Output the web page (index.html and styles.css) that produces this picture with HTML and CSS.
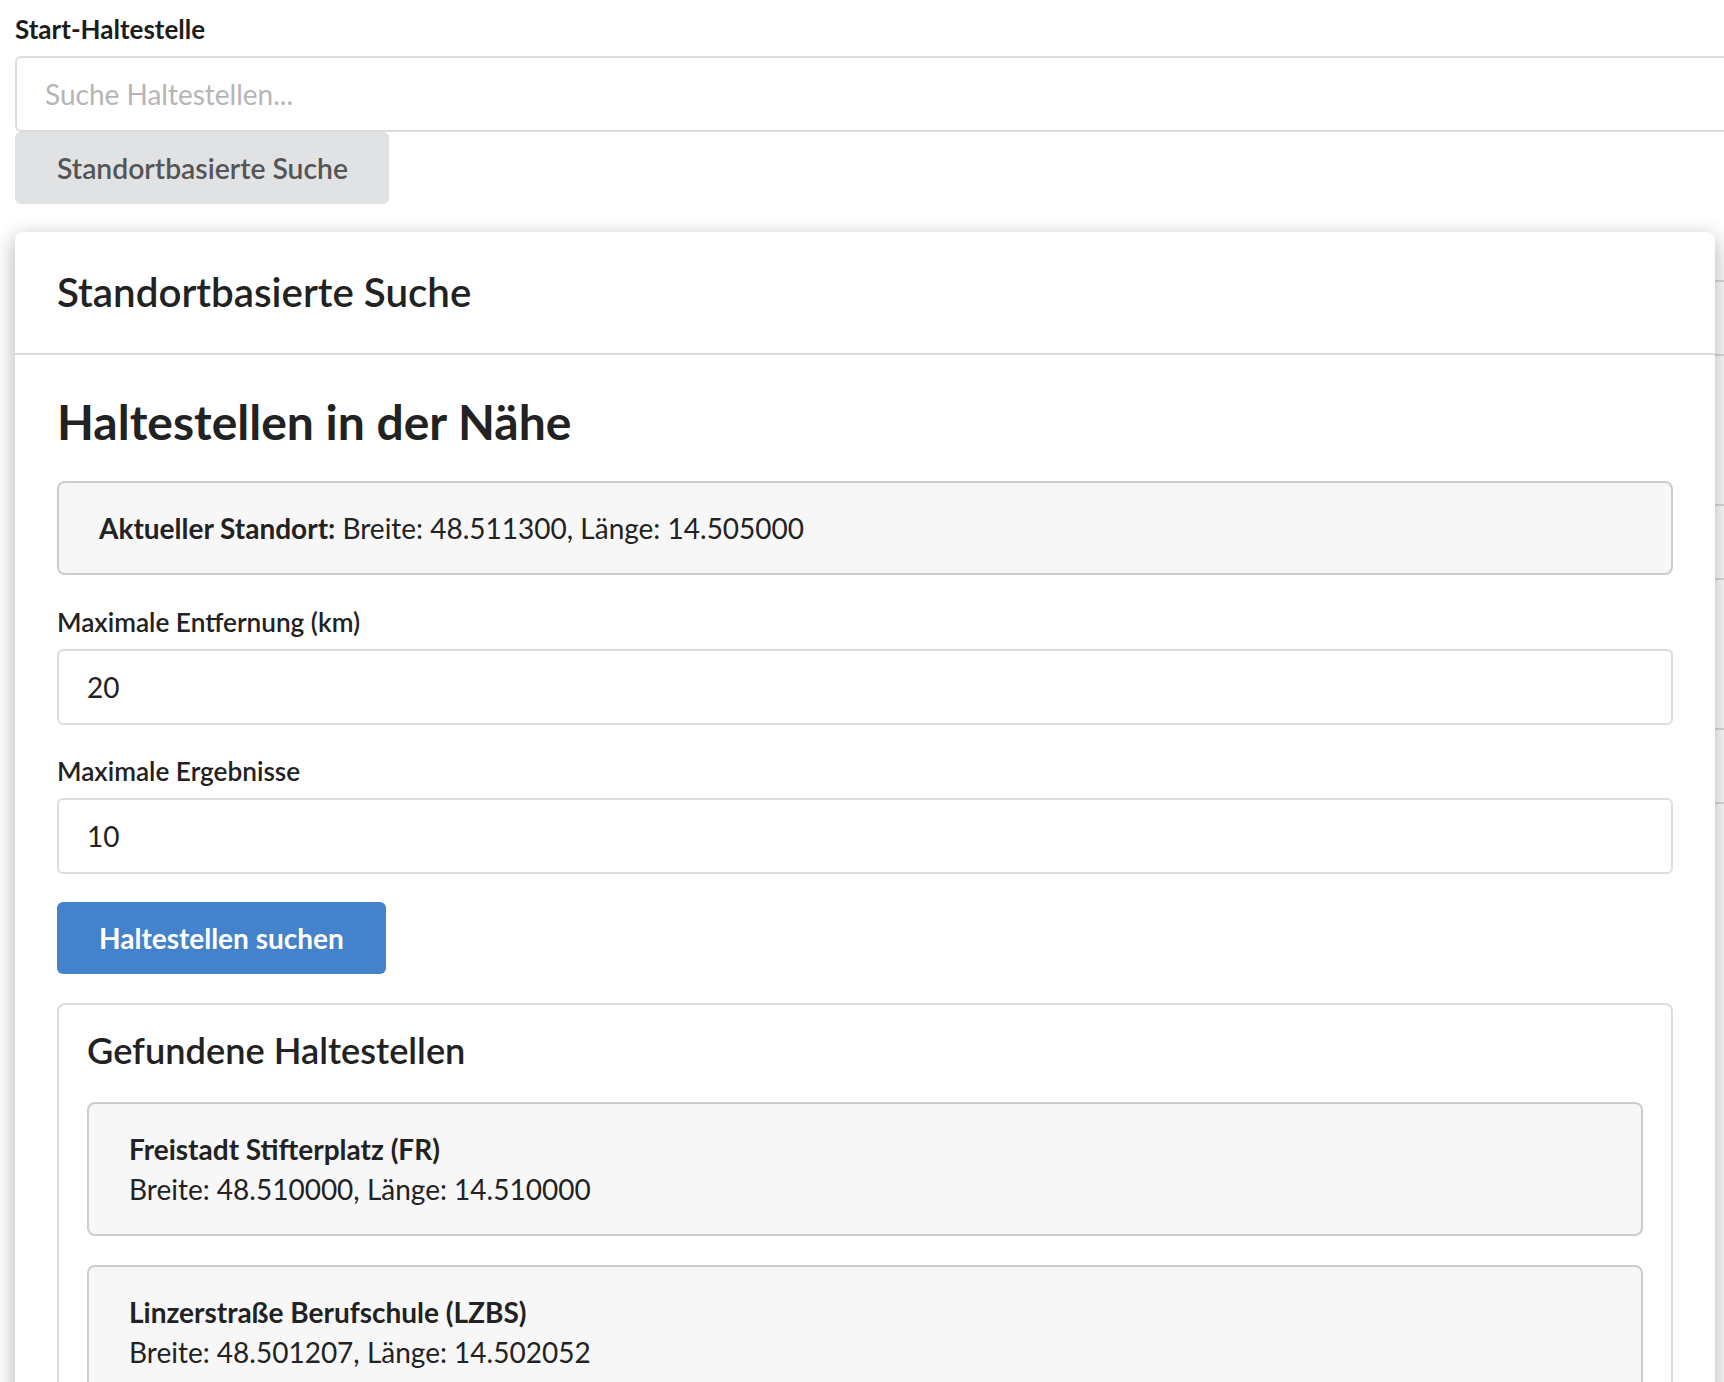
FILE: index.html
```html
<!DOCTYPE html>
<html lang="de">
<head>
<meta charset="utf-8">
<title>Standortbasierte Suche</title>
<link rel="stylesheet" href="styles.css">
</head>
<body>
<div class="page">
  <div class="field">
    <label class="page-label" for="start">Start-Haltestelle</label>
    <input id="start" class="page-input" type="text" placeholder="Suche Haltestellen...">
    <button class="btn btn-gray" type="button">Standortbasierte Suche</button>
  </div>
  <div class="field">
    <div class="ghost-label"></div>
    <input class="page-input" type="text" aria-label="Ziel-Haltestelle">
    <div class="ghost-button"></div>
  </div>
  <div class="field">
    <div class="ghost-label"></div>
    <input class="page-input" type="text" aria-label="Datum">
    <div class="ghost-button"></div>
  </div>
  <div class="field">
    <div class="ghost-label"></div>
    <input class="page-input" type="text" aria-label="Uhrzeit">
    <div class="ghost-button"></div>
  </div>
</div>

<div class="modal">
  <div class="modal-header">
    <h3 class="modal-title">Standortbasierte Suche</h3>
  </div>
  <div class="modal-body">
    <h2 class="section-title">Haltestellen in der Nähe</h2>
    <div class="info-box"><strong>Aktueller Standort:</strong> Breite: 48.511300, Länge: 14.505000</div>
    <div class="form-group">
      <label class="form-label" for="dist">Maximale Entfernung (km)</label>
      <input id="dist" class="form-input" type="number" value="20">
    </div>
    <div class="form-group">
      <label class="form-label" for="max">Maximale Ergebnisse</label>
      <input id="max" class="form-input" type="number" value="10">
    </div>
    <button class="btn btn-primary" type="button">Haltestellen suchen</button>
    <div class="results">
      <h4 class="results-title">Gefundene Haltestellen</h4>
      <div class="stop">
        <div class="stop-name">Freistadt Stifterplatz (FR)</div>
        <div class="stop-coords">Breite: 48.510000, Länge: 14.510000</div>
      </div>
      <div class="stop">
        <div class="stop-name">Linzerstraße Berufschule (LZBS)</div>
        <div class="stop-coords">Breite: 48.501207, Länge: 14.502052</div>
      </div>
    </div>
  </div>
</div>
</body>
</html>
```

FILE: styles.css
```css
html, body {
  margin: 0;
  padding: 0;
  overflow: hidden;
  height: 100%;
  background: #ffffff;
}

body {
  font-family: Lato, "Helvetica Neue", Arial, sans-serif;
  font-size: 28px;
  line-height: 40px;
  color: #222222;
}

.page {
  padding: 12px 0 0 15px;
}

.field {
  margin-bottom: 32px;
}

.page-label {
  display: block;
  height: 34px;
  font-size: 26px;
  line-height: 34px;
  font-weight: 700;
  color: #1c1c1c;
  margin-bottom: 10px;
}

.ghost-label {
  height: 44px;
}

.ghost-button {
  height: 72px;
}

.page-input {
  display: block;
  box-sizing: border-box;
  width: calc(100vw + 40px);
  height: 76px;
  padding: 16px 28px;
  font-family: inherit;
  font-size: 28px;
  line-height: 40px;
  color: #222222;
  border: 2px solid #dddddd;
  border-radius: 6px;
  background: #ffffff;
}

.page-input::placeholder {
  color: #b5b5b5;
}

.btn {
  display: inline-block;
  box-sizing: border-box;
  height: 72px;
  font-family: inherit;
  font-size: 28px;
  line-height: 40px;
  padding: 16px 42px;
  border: none;
  border-radius: 6px;
  white-space: nowrap;
  cursor: pointer;
}

.btn-gray {
  display: block;
  width: max-content;
  padding: 16px 41px 16px 42px;
  background: #e1e2e4;
  color: #555555;
  font-weight: 600;
  font-size: 28.3px;
}

.btn-primary {
  background: #4483cb;
  color: #ffffff;
  font-weight: 700;
}

.modal {
  position: absolute;
  top: 232px;
  left: 15px;
  right: 9px;
  background: #ffffff;
  border-radius: 8px;
  box-shadow: 0 6px 22px rgba(0, 0, 0, 0.32);
}

.modal-header {
  padding: 36px 42px 37px;
  border-bottom: 2px solid #dddddd;
}

.modal-title {
  margin: 0;
  font-size: 40.3px;
  line-height: 48px;
  font-weight: 600;
  color: #222222;
}

.modal-body {
  padding: 40px 42px;
}

.section-title {
  margin: 0 0 33px;
  font-size: 48px;
  line-height: 53px;
  font-weight: 700;
  color: #222222;
}

.info-box {
  padding: 25px 40px;
  background: #f7f7f7;
  border: 2px solid #cccccc;
  border-radius: 8px;
  margin-bottom: 29px;
}

.info-box strong {
  font-weight: 700;
}

.form-group {
  margin-bottom: 28px;
}

.form-label {
  display: block;
  font-size: 26.2px;
  line-height: 36px;
  font-weight: 600;
  margin-bottom: 9px;
}

.form-input {
  display: block;
  box-sizing: border-box;
  width: 100%;
  height: 76px;
  padding: 16px 28px;
  font-family: inherit;
  font-size: 28px;
  line-height: 40px;
  color: #222222;
  border: 2px solid #dddddd;
  border-radius: 6px;
  background: #ffffff;
  -moz-appearance: textfield;
}

.form-input::-webkit-outer-spin-button,
.form-input::-webkit-inner-spin-button {
  -webkit-appearance: none;
  margin: 0;
}

.results {
  margin-top: 29px;
  padding: 25px 28px 28px;
  border: 2px solid #dddddd;
  border-radius: 8px;
}

.results-title {
  margin: 0 0 32px;
  font-size: 36.2px;
  line-height: 40px;
  font-weight: 600;
  color: #222222;
}

.stop {
  padding: 25px 40px;
  background: #f7f7f7;
  border: 2px solid #cccccc;
  border-radius: 8px;
  margin-bottom: 29px;
}

.stop-name {
  font-weight: 700;
}
```
